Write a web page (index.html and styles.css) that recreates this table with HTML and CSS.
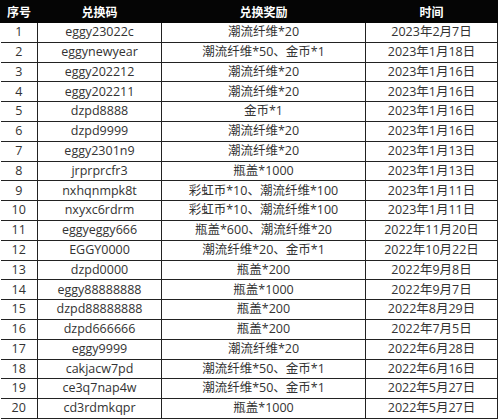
FILE: index.html
```html
<!DOCTYPE html>
<html lang="zh">
<head>
<meta charset="utf-8">
<link rel="stylesheet" href="styles.css">
</head>
<body>
<table class="codes">
  <colgroup>
    <col class="c-no"><col class="c-code"><col class="c-reward"><col class="c-date">
  </colgroup>
  <thead>
    <tr><th>序号</th><th>兑换码</th><th>兑换奖励</th><th>时间</th></tr>
  </thead>
  <tbody>
    <tr><td>1</td><td>eggy23022c</td><td>潮流纤维*20</td><td>2023年2月7日</td></tr>
    <tr><td>2</td><td>eggynewyear</td><td>潮流纤维*50、金币*1</td><td>2023年1月18日</td></tr>
    <tr><td>3</td><td>eggy202212</td><td>潮流纤维*20</td><td>2023年1月16日</td></tr>
    <tr><td>4</td><td>eggy202211</td><td>潮流纤维*20</td><td>2023年1月16日</td></tr>
    <tr><td>5</td><td>dzpd8888</td><td>金币*1</td><td>2023年1月16日</td></tr>
    <tr><td>6</td><td>dzpd9999</td><td>潮流纤维*20</td><td>2023年1月16日</td></tr>
    <tr><td>7</td><td>eggy2301n9</td><td>潮流纤维*20</td><td>2023年1月13日</td></tr>
    <tr><td>8</td><td>jrprprcfr3</td><td>瓶盖*1000</td><td>2023年1月13日</td></tr>
    <tr><td>9</td><td>nxhqnmpk8t</td><td>彩虹币*10、潮流纤维*100</td><td>2023年1月11日</td></tr>
    <tr><td>10</td><td>nxyxc6rdrm</td><td>彩虹币*10、潮流纤维*100</td><td>2023年1月11日</td></tr>
    <tr><td>11</td><td>eggyeggy666</td><td>瓶盖*600、潮流纤维*20</td><td>2022年11月20日</td></tr>
    <tr><td>12</td><td>EGGY0000</td><td>潮流纤维*20、金币*1</td><td>2022年10月22日</td></tr>
    <tr><td>13</td><td>dzpd0000</td><td>瓶盖*200</td><td>2022年9月8日</td></tr>
    <tr><td>14</td><td>eggy88888888</td><td>瓶盖*1000</td><td>2022年9月7日</td></tr>
    <tr><td>15</td><td>dzpd88888888</td><td>瓶盖*200</td><td>2022年8月29日</td></tr>
    <tr><td>16</td><td>dzpd666666</td><td>瓶盖*200</td><td>2022年7月5日</td></tr>
    <tr><td>17</td><td>eggy9999</td><td>潮流纤维*20</td><td>2022年6月28日</td></tr>
    <tr><td>18</td><td>cakjacw7pd</td><td>潮流纤维*50、金币*1</td><td>2022年6月16日</td></tr>
    <tr><td>19</td><td>ce3q7nap4w</td><td>潮流纤维*50、金币*1</td><td>2022年5月27日</td></tr>
    <tr><td>20</td><td>cd3rdmkqpr</td><td>瓶盖*1000</td><td>2022年5月27日</td></tr>
  </tbody>
</table>
</body>
</html>
```
FILE: styles.css
```css
html, body {
  margin: 0;
  padding: 0;
  background: #fff;
}
.codes {
  border-collapse: collapse;
  table-layout: fixed;
  width: 497px;
  font-family: "Open Sans", "Noto Sans CJK SC", sans-serif;
  font-size: 12.5px;
  color: #333;
}
.c-no { width: 37px; }
.c-code { width: 124px; }
.c-reward { width: 204px; }
.c-date { width: 132px; }
.codes th {
  background: #050505;
  color: #fff;
  font-family: "Noto Sans CJK SC", sans-serif;
  font-weight: 700;
  font-size: 12px;
  height: 21px;
  padding: 0;
  border: 1px solid #050505;
  line-height: 1;
}
.codes td {
  border: 1px solid #222;
  padding: 0;
  height: 18.8px;
  line-height: 1;
  text-align: center;
  white-space: nowrap;
}
.codes td:first-child { border-left: none; }
```
